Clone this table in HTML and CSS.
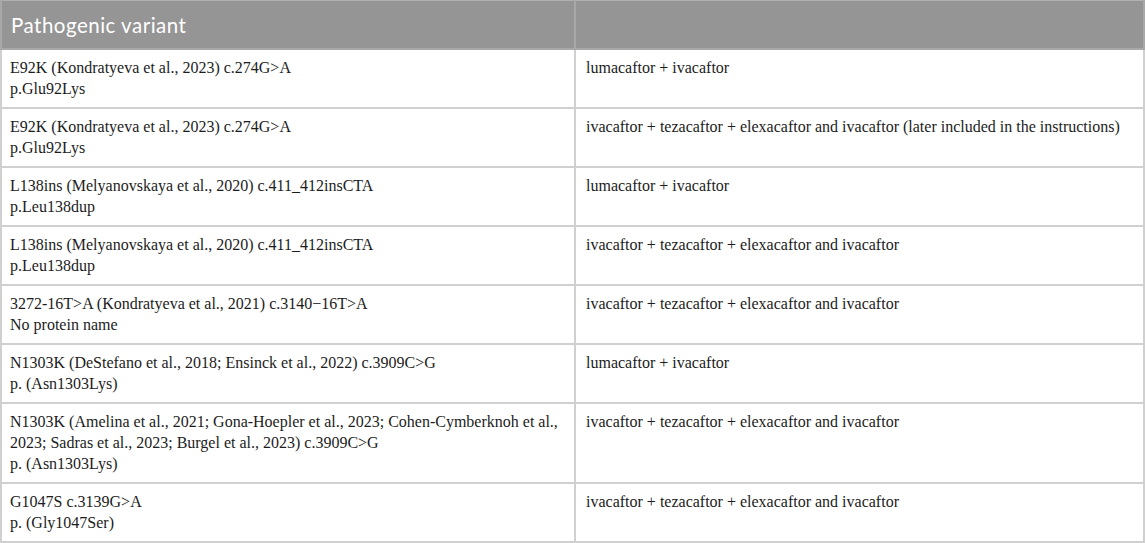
FILE: index.html
```html
<!DOCTYPE html>
<html>
<head>
<meta charset="utf-8">
<link rel="stylesheet" href="styles.css">
</head>
<body>
<table class="variants">
  <thead>
    <tr><th class="col-variant">Pathogenic variant</th><th class="col-drug"></th></tr>
  </thead>
  <tbody>
    <tr class="r2"><td>E92K (Kondratyeva et al., 2023) c.274G&gt;A<br>p.Glu92Lys</td><td>lumacaftor + ivacaftor</td></tr>
    <tr class="r2"><td>E92K (Kondratyeva et al., 2023) c.274G&gt;A<br>p.Glu92Lys</td><td>ivacaftor + tezacaftor + elexacaftor and ivacaftor (later included in the instructions)</td></tr>
    <tr class="r2"><td>L138ins (Melyanovskaya et al., 2020) c.411_412insCTA<br>p.Leu138dup</td><td>lumacaftor + ivacaftor</td></tr>
    <tr class="r2"><td>L138ins (Melyanovskaya et al., 2020) c.411_412insCTA<br>p.Leu138dup</td><td>ivacaftor + tezacaftor + elexacaftor and ivacaftor</td></tr>
    <tr class="r2"><td>3272-16T&gt;A (Kondratyeva et al., 2021) c.3140−16T&gt;A<br>No protein name</td><td>ivacaftor + tezacaftor + elexacaftor and ivacaftor</td></tr>
    <tr class="r2"><td>N1303K (DeStefano et al., 2018; Ensinck et al., 2022) c.3909C&gt;G<br>p. (Asn1303Lys)</td><td>lumacaftor + ivacaftor</td></tr>
    <tr class="r3"><td>N1303K (Amelina et al., 2021; Gona-Hoepler et al., 2023; Cohen-Cymberknoh et al., 2023; Sadras et al., 2023; Burgel et al., 2023) c.3909C&gt;G<br>p. (Asn1303Lys)</td><td>ivacaftor + tezacaftor + elexacaftor and ivacaftor</td></tr>
    <tr class="r2"><td>G1047S c.3139G&gt;A<br>p. (Gly1047Ser)</td><td>ivacaftor + tezacaftor + elexacaftor and ivacaftor</td></tr>
  </tbody>
</table>
</body>
</html>
```

FILE: styles.css
```css
html, body {
  margin: 0;
  padding: 0;
  background: #ffffff;
}
.variants {
  width: 1145px;
  border-collapse: collapse;
  table-layout: fixed;
  font-family: "Liberation Serif", "Times New Roman", serif;
  font-size: 16px;
  line-height: 21px;
  color: #1c1c1c;
}
.variants th {
  background: #959595;
  color: #ffffff;
  font-family: Lato, "Open Sans", sans-serif;
  font-weight: 400;
  font-size: 20.5px;
  letter-spacing: 0.5px;
  text-align: left;
  height: 48px;
  padding: 2px 9px 0 9px;
  box-sizing: border-box;
  border: 2px solid #a8a8a8;
  border-top: 1px solid #b0b0b0;
}
.variants .col-variant {
  width: 574px;
}
.variants td {
  vertical-align: top;
  padding: 7px 6px 8px 8px;
  border: 2px solid #d0d0d0;
}
.variants td + td {
  padding-left: 10px;
}
.variants tr.r2 td {
  height: 42px;
}
```
